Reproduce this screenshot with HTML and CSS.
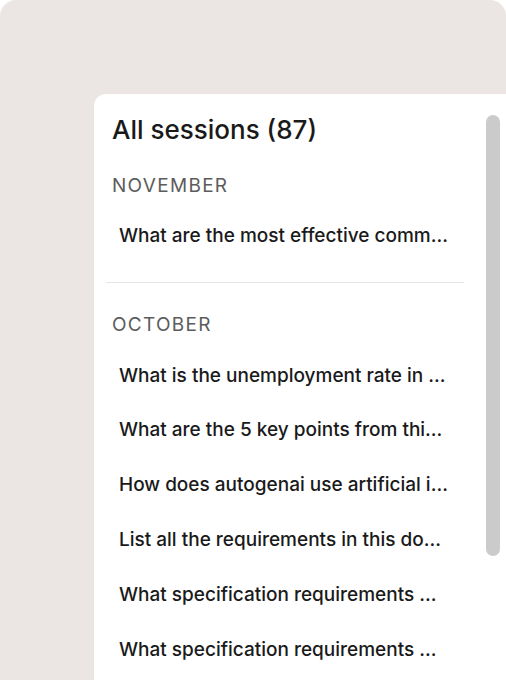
FILE: index.html
```html
<!DOCTYPE html>
<html>
<head>
<meta charset="utf-8">
<link rel="stylesheet" href="styles.css">
</head>
<body>
<div class="frame">
  <div class="panel">
    <div class="list">
      <h1 class="title">All sessions (87)</h1>
      <section class="group">
        <h2 class="group-label">NOVEMBER</h2>
        <div class="item">What are the most effective comm...</div>
      </section>
      <hr class="divider">
      <section class="group">
        <h2 class="group-label">OCTOBER</h2>
        <div class="item">What is the unemployment rate in ...</div>
        <div class="item">What are the 5 key points from thi...</div>
        <div class="item">How does autogenai use artificial i...</div>
        <div class="item">List all the requirements in this do...</div>
        <div class="item">What specification requirements ...</div>
        <div class="item">What specification requirements ...</div>
      </section>
    </div>
    <div class="scrollbar"><div class="thumb"></div></div>
  </div>
</div>
</body>
</html>
```
FILE: styles.css
```css
html, body {
  margin: 0;
  padding: 0;
  background: #ffffff;
  height: 100%;
  overflow: hidden;
}
body {
  font-family: Inter, "Liberation Sans", sans-serif;
}
.frame {
  background: #ebe6e3;
  border-radius: 16px 16px 0 0;
  height: 100%;
  padding: 94px 0 0 94px;
  box-sizing: border-box;
  display: flex;
}
.panel {
  flex: 1;
  background: #ffffff;
  border-top-left-radius: 12px;
  display: flex;
  padding: 0 0 0 12px;
  overflow: hidden;
}
.list {
  width: 358px;
  flex-shrink: 0;
  padding-top: 22px;
}
.title {
  margin: 0 0 0 6px;
  font-size: 26px;
  line-height: 28px;
  font-weight: 500;
  color: #1a1a1a;
  letter-spacing: 0;
  white-space: nowrap;
}
.group-label {
  margin: 32px 0 12px 6px;
  font-size: 19px;
  line-height: 20px;
  font-weight: 400;
  letter-spacing: 1.3px;
  color: #5c5c5c;
}
.divider + .group .group-label {
  margin-top: 32px;
  margin-bottom: 13px;
}
.item {
  height: 54.8px;
  display: flex;
  align-items: center;
  padding-left: 13px;
  font-size: 19px;
  font-weight: 500;
  color: #1a1a1a;
  white-space: nowrap;
}
.divider {
  border: 0;
  border-top: 1px solid #e6e6e6;
  margin: 19px 0 0 0;
}
.scrollbar {
  margin-left: 22px;
  padding-top: 21px;
}
.thumb {
  width: 14px;
  height: 441px;
  background: #cbcbcb;
  border-radius: 7px;
}
```
